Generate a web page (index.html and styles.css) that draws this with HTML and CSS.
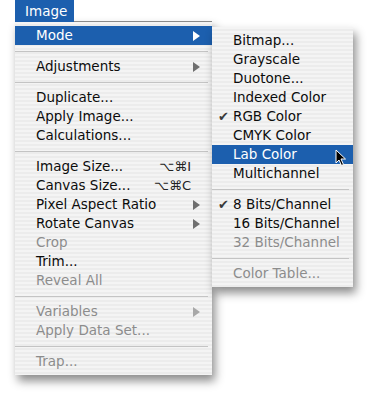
FILE: index.html
```html
<!DOCTYPE html>
<html>
<head>
    <title>Image Menu</title>
    <link rel="stylesheet" href="styles.css">
</head>
<body>
    <div class="menubar">
        <span class="menu-title">Image</span>
    </div>

    <div class="menu main-menu">
        <div class="item active">Mode <span class="arrow"></span></div>
        <div class="sep"></div>
        <div class="item">Adjustments <span class="arrow"></span></div>
        <div class="sep"></div>
        <div class="item">Duplicate...</div>
        <div class="item">Apply Image...</div>
        <div class="item">Calculations...</div>
        <div class="sep"></div>
        <div class="item">Image Size... <span class="key">⌥⌘I</span></div>
        <div class="item">Canvas Size... <span class="key">⌥⌘C</span></div>
        <div class="item">Pixel Aspect Ratio <span class="arrow"></span></div>
        <div class="item">Rotate Canvas <span class="arrow"></span></div>
        <div class="item disabled">Crop</div>
        <div class="item">Trim...</div>
        <div class="item disabled">Reveal All</div>
        <div class="sep"></div>
        <div class="item disabled">Variables <span class="arrow"></span></div>
        <div class="item disabled">Apply Data Set...</div>
        <div class="sep"></div>
        <div class="item disabled">Trap...</div>
    </div>

    <div class="menu sub-menu">
        <div class="item"><span class="check"></span>Bitmap...</div>
        <div class="item"><span class="check"></span>Grayscale</div>
        <div class="item"><span class="check"></span>Duotone...</div>
        <div class="item"><span class="check"></span>Indexed Color</div>
        <div class="item"><span class="check">✔</span>RGB Color</div>
        <div class="item"><span class="check"></span>CMYK Color</div>
        <div class="item active"><span class="check"></span>Lab Color
            <svg class="cursor" width="12" height="18" viewBox="0 0 12 18">
                <path d="M1 1 L1 14 L4 11 L6.5 16.5 L8.5 15.5 L6 10 L10.5 10 Z" fill="#000" stroke="#fff" stroke-width="1"/>
            </svg>
        </div>
        <div class="item"><span class="check"></span>Multichannel</div>
        <div class="sep"></div>
        <div class="item"><span class="check">✔</span>8 Bits/Channel</div>
        <div class="item"><span class="check"></span>16 Bits/Channel</div>
        <div class="item disabled"><span class="check"></span>32 Bits/Channel</div>
        <div class="sep"></div>
        <div class="item disabled"><span class="check"></span>Color Table...</div>
    </div>
</body>
</html>
```

FILE: styles.css
```css
body {
    margin: 0;
    background-color: #fff;
    font-family: "DejaVu Sans", sans-serif;
    font-size: 13.5px;
    color: #0c0c0c;
    position: relative;
    height: 394px;
    overflow: hidden;
}

.menubar {
    height: 22px;
    padding-left: 15px;
    display: flex;
}

.menu-title {
    background-color: #1c5fae;
    color: #fff;
    width: 59px;
    padding-left: 10px;
    box-sizing: border-box;
    line-height: 22px;
}

.menu {
    background: repeating-linear-gradient(to bottom, #f4f4f4 0, #f4f4f4 2px, #ececec 2px, #ececec 4px);
    padding: 4px 0;
    box-shadow: 3px 6px 9px rgba(0, 0, 0, 0.45);
}

.main-menu {
    margin-left: 15px;
    width: 197px;
    border-top: 1px solid #8a8a8a;
    margin-top: -1px;
}

.sub-menu {
    position: absolute;
    left: 212px;
    top: 27px;
    width: 141px;
}

.item {
    height: 19px;
    line-height: 19px;
    padding: 0 12px 0 21px;
    display: flex;
    align-items: center;
    justify-content: space-between;
    white-space: nowrap;
    position: relative;
}

.sub-menu .item {
    padding-left: 6px;
    justify-content: flex-start;
}

.item.active {
    background-color: #1c5fae;
    color: #fff;
}

.item.disabled {
    color: #8c8c8c;
}

.arrow {
    width: 0;
    height: 0;
    border-top: 5px solid transparent;
    border-bottom: 5px solid transparent;
    border-left: 7px solid #6e6e6e;
}

.item.active .arrow {
    border-left-color: #fff;
}

.item.disabled .arrow {
    border-left-color: #a8a8a8;
}

.key {
    font-size: 13px;
    color: #222;
    padding-right: 9px;
}

.check {
    width: 15px;
    font-size: 13px;
    color: #3a3a3a;
}

.sep {
    height: 12px;
    display: flex;
    align-items: center;
}

.sep::before {
    content: "";
    flex: 1;
    height: 1px;
    background-color: #c4c4c4;
    margin-right: 4px;
}

.cursor {
    position: absolute;
    left: 123px;
    top: 4px;
}
```
